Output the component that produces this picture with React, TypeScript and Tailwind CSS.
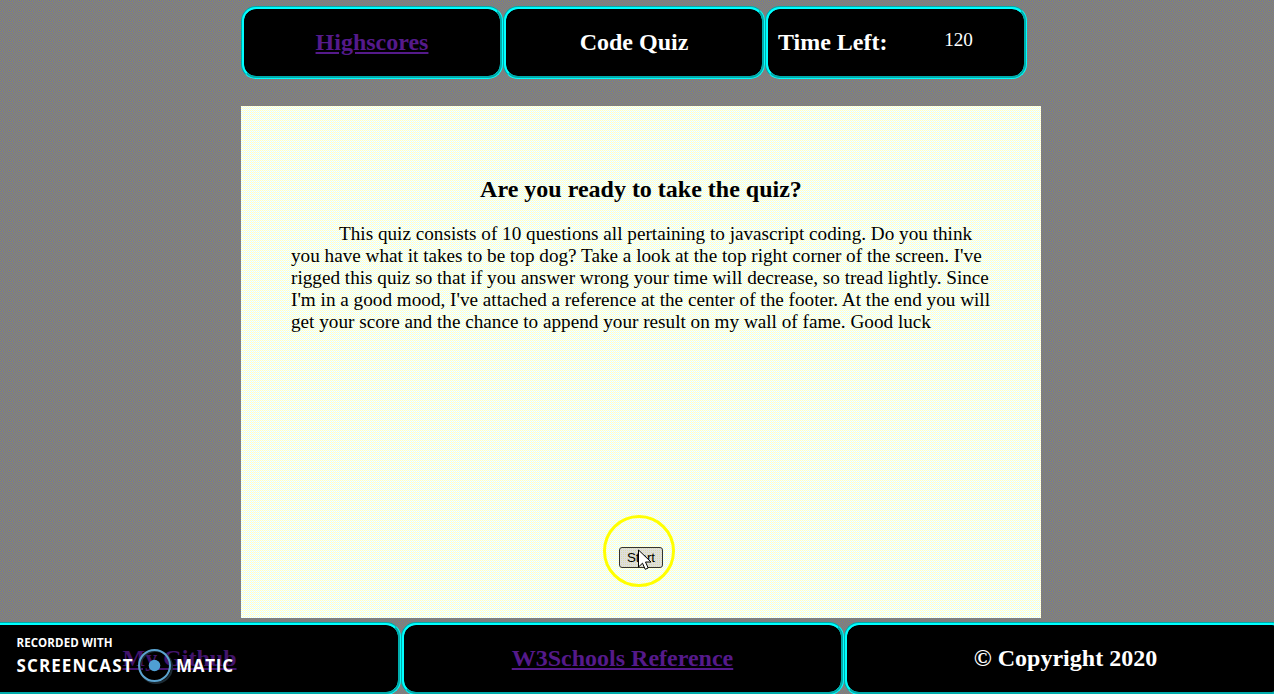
import type { ReactNode } from "react";

function Box({ children, className = "justify-center" }: { children?: ReactNode; className?: string }) {
  return (
    <div
      className={`flex h-[73px] w-1/3 items-center rounded-[15px] border-[3px] border-[#00ffff] bg-black pb-[2px] text-[24px] font-bold text-white [border-style:groove] ${className}`}
    >
      {children}
    </div>
  );
}

function Watermark() {
  return (
    <svg className="absolute top-[636px] left-[16px] overflow-visible" width="230" height="52" viewBox="0 0 230 52">
      <g fill="#fff" fontFamily="'Open Sans', sans-serif" fontWeight="700">
        <text x="0.500" y="11" fontSize="11.500" textLength="96" lengthAdjust="spacing">RECORDED WITH</text>
        <text x="0.500" y="35.500" fontSize="17" textLength="116" lengthAdjust="spacing">SCREENCAST</text>
        <text x="160" y="35.500" fontSize="17" textLength="57" lengthAdjust="spacing">MATIC</text>
      </g>
      <circle cx="140" cy="31" r="16" fill="none" stroke="#1c2a33" strokeWidth="2" />
      <circle cx="138.500" cy="29.500" r="15.500" fill="none" stroke="#5ba3cf" strokeWidth="2" />
      <circle cx="138.500" cy="29.500" r="5.800" fill="#4f9fd3" />
    </svg>
  );
}

export default function App() {
  return (
    <div className="relative flex h-[694px] w-[1274px] flex-col overflow-hidden bg-[conic-gradient(#6d6daa_25%,#929255_0_50%,#6d6daa_0_75%,#929255_0)] bg-[length:2px_2px] font-['Liberation_Serif',serif]">
      <header className="mt-[6px] ml-[241px] flex w-[786px]">
        <Box>
          <a className="text-[#551a8b] underline">Highscores</a>
        </Box>
        <Box>Code Quiz</Box>
        <Box className="justify-between pr-[51px] pl-[10px]">
          <span>Time Left:</span>
          <span className="pb-[3px] text-[19.2px] font-normal">120</span>
        </Box>
      </header>
      <main className="mt-[27px] ml-[241px] flex h-[512px] w-[800px] shrink-0 flex-col items-center bg-[conic-gradient(#ffffc4_25%,#ffffff_0_50%,#dbffff_0_75%,#ffffee_0)] bg-[length:2px_2px] px-[50px] pt-[69px] text-black">
        <h1 className="text-[24px] leading-[28px] font-bold">Are you ready to take the quiz?</h1>
        <p className="mt-[20px] w-full indent-[48px] text-[19.2px] leading-[22px]">
          This quiz consists of 10 questions all pertaining to javascript coding. Do you think you have what it takes to be top dog? Take a look at the top right corner of the screen. I've rigged this quiz so that if you answer wrong your time will decrease, so tread lightly. Since I'm in a good mood, I've attached a reference at the center of the footer. At the end you will get your score and the chance to append your result on my wall of fame. Good luck
        </p>
        <button className="mt-auto mb-[50px] h-[21px] w-[44px] rounded-[3px] border border-[#333] bg-[conic-gradient(#dbdbaa_25%,#dedede_0)] bg-[length:2px_2px] font-['Liberation_Sans',sans-serif] text-[13.333px] leading-none">
          Start
        </button>
      </main>
      <footer className="mt-[4px] -ml-[42px] flex w-[1329px] shrink-0">
        <Box>
          <a className="text-[#42146c] underline">My Github</a>
        </Box>
        <Box>
          <a className="text-[#551a8b] underline">W3Schools Reference</a>
        </Box>
        <Box>© Copyright 2020</Box>
      </footer>
      <Watermark />
      <svg className="absolute top-[514px] left-[602px]" width="75" height="75" viewBox="0 0 75 75">
        <circle cx="37" cy="37" r="34.500" fill="none" stroke="#ffff00" strokeWidth="3" />
        <path d="M36.500 36v17l4-3.800 2.700 6.100 3-1.300-2.700-6h5.500z" fill="#fff" stroke="#000" strokeWidth="1" />
      </svg>
    </div>
  );
}
